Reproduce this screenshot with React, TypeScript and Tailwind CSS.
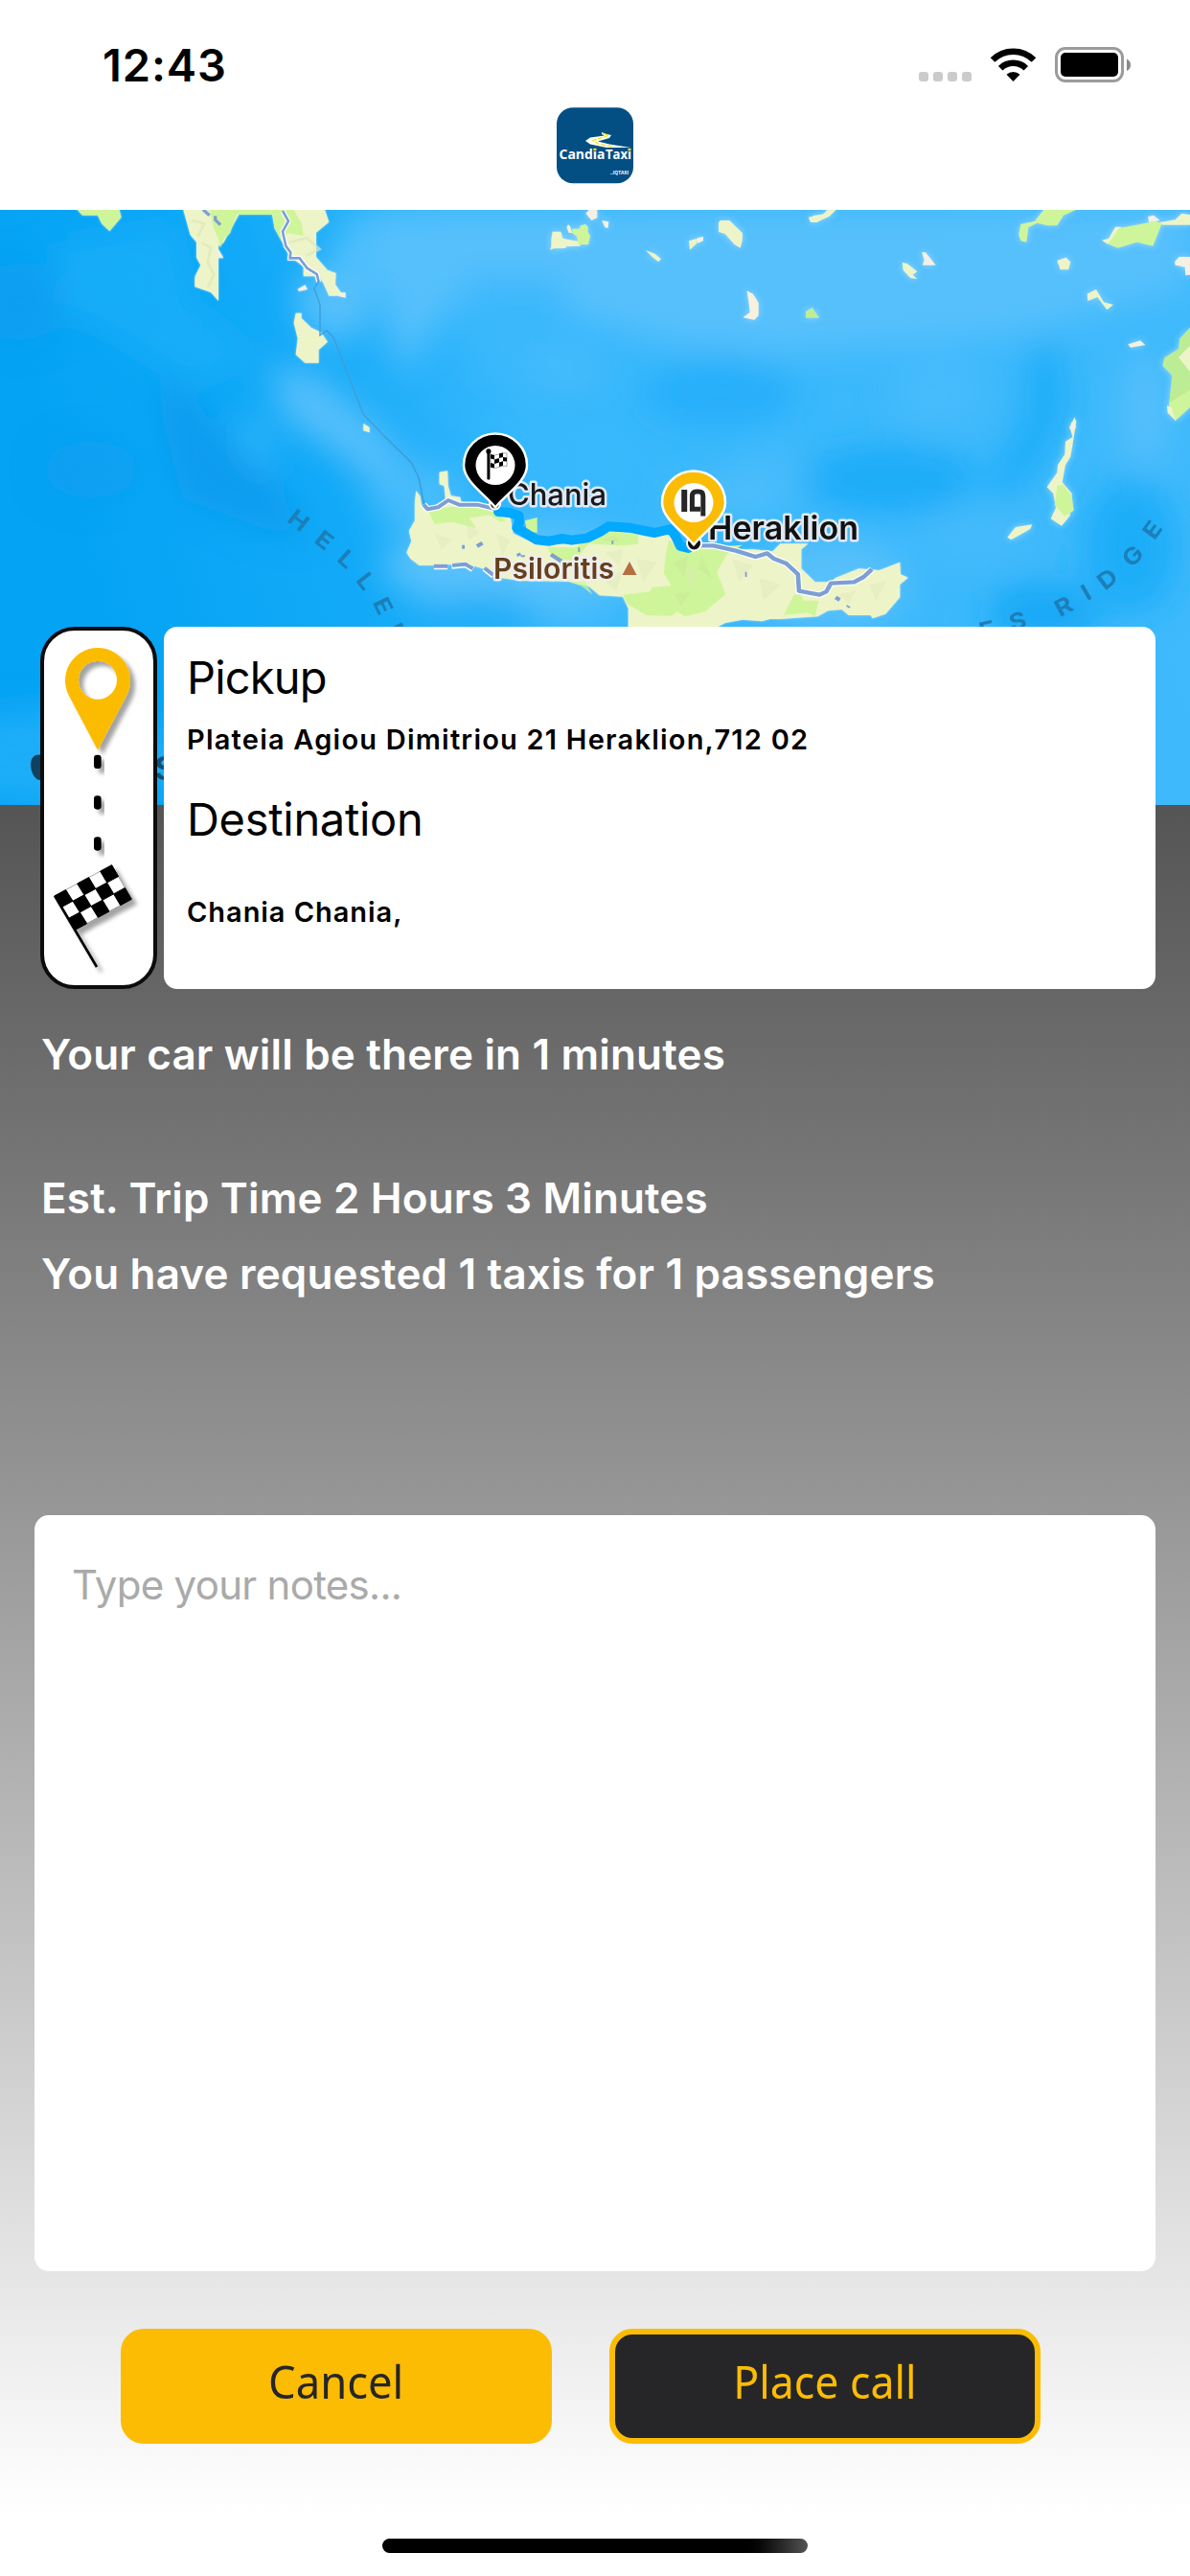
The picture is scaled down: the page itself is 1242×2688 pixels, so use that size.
import React from "react";

const LAND = "#edf4c8";
const GREEN = "#cff59a";
const ROCK = "#f3f0e4";

function Sea() {
  return (
    <g>
      <rect x="0" y="219" width="1242" height="621" fill="url(#sea)" />
      <g filter="url(#soft)">
        <ellipse cx="20" cy="315" rx="50" ry="40" fill="#0e9df0" opacity=".8" />
        <path d="M60 255L180 235L200 320L270 370L200 400L120 350L60 320Z" fill="#1fb0fa" opacity=".7" />
        <path d="M160 395L200 415L235 460L290 510L320 560L270 550L190 520L175 460Z" fill="#0b9bee" />
        <ellipse cx="95" cy="490" rx="50" ry="30" fill="#0b9cef" opacity=".6" />
        <path d="M280 380L330 390L400 450L430 490L400 515L350 470L300 440Z" fill="#57bffb" />
        <path d="M245 440L275 430L285 500L262 480Z" fill="#31b5fa" />
        <ellipse cx="350" cy="315" rx="40" ry="40" fill="#56c0fb" />
        <ellipse cx="400" cy="260" rx="50" ry="40" fill="#50bffc" />
        <path d="M400 219L1242 219L1242 300L1060 350L820 370L700 360L600 330L470 320L420 390L400 320Z" fill="#56c0fc" />
        <path d="M480 290L580 290L600 340L560 400L500 390Z" fill="#3ab8fc" />
        <ellipse cx="750" cy="410" rx="80" ry="35" fill="#25affa" />
        <ellipse cx="590" cy="385" rx="40" ry="20" fill="#47bcfc" />
        <ellipse cx="930" cy="500" rx="90" ry="35" fill="#1bacf8" />
        <ellipse cx="800" cy="490" rx="40" ry="20" fill="#46bbfb" />
        <path d="M1075 360L1105 360L1115 420L1090 480L1040 530L1030 500L1070 440Z" fill="#1dadf8" />
        <ellipse cx="980" cy="410" rx="50" ry="40" fill="#46bbfb" />
        <ellipse cx="1195" cy="430" rx="24" ry="60" fill="#56bffb" />
        <ellipse cx="1180" cy="570" rx="50" ry="70" fill="#1eadf8" />
        <ellipse cx="1020" cy="560" rx="60" ry="30" fill="#44bafb" />
        <ellipse cx="1090" cy="640" rx="60" ry="30" fill="#16a8f6" />
        <ellipse cx="440" cy="520" rx="50" ry="36" fill="#46bcfb" />
        <ellipse cx="540" cy="590" rx="140" ry="45" fill="#58c1fb" />
        <ellipse cx="760" cy="520" rx="70" ry="22" fill="#4dbdfb" />
        <ellipse cx="500" cy="640" rx="60" ry="20" fill="#1aadf8" />
        <ellipse cx="600" cy="645" rx="40" ry="12" fill="#44bbfb" />
        <ellipse cx="60" cy="790" rx="140" ry="50" fill="#1fadf8" />
        <ellipse cx="870" cy="610" rx="80" ry="50" fill="#56c0fb" />
      </g>
    </g>
  );
}

function NorthWestLand() {
  return (
    <g transform="matrix(.33333 0 0 .33333 0 210)" filter="url(#shore)">
      <path d="M236 20H372L380 50L343 94L318 70L306 44H258Z" fill={GREEN} />
      <path d="M572 20H760L700 130L684 140V312L660 285L610 268V236L628 200L615 176V128L596 106Z" fill={LAND} />
      <path d="M655 20H750L720 100L700 120L690 145L684 120L668 80Z" fill={GREEN} />
      <path d="M740 20H890V42H735Z" fill={GREEN} />
      <path d="M848 20H1015L1030 65L990 98V175L1025 215L1052 225L1050 260L1075 296H1030L1014 260L1000 235H950V205L905 170L880 120L860 85Z" fill={LAND} />
      <path d="M850 20H915L945 70L950 108L900 100L882 125L860 85Z" fill={GREEN} />
      <path d="M684 150L700 178H684ZM932 275L955 262L963 276L936 282ZM1062 286H1082V302L1062 298Z" fill={ROCK} />
      <path d="M926 350H944V366L975 396L1005 410L1026 440L998 465V506H955L926 480L932 430L920 380Z" fill={LAND} />
      <path d="M1138 696L1157 708V724L1138 718Z" fill={LAND} />
      <path d="M632 130L660 145L650 190L670 230L650 270M600 60L640 70L620 110M905 130L960 115L1000 150L960 170" fill="none" stroke="#dce4b8" strokeWidth="8" opacity=".6" />
      <path d="M885 30L903 62L885 95L895 140L910 160L908 178H938L962 210L992 228L998 252" fill="none" stroke="#fff" strokeWidth="15" />
      <path d="M885 30L903 62L885 95L895 140L910 160L908 178H938L962 210L992 228L998 252" fill="none" stroke="#7d9fd3" strokeWidth="8" />
      <path d="M636 26L656 44M674 46V58L690 74" fill="none" stroke="#7d9fd3" strokeWidth="10" />
    </g>
  );
}

function Cyclades() {
  return (
    <g filter="url(#shore)">
      <g transform="matrix(.33333 0 0 .33333 400 210)">
        <path d="M522 152L526 140V120L530 95H556L562 116L580 120L610 125L618 140L574 142L570 147L535 148ZM574 80L580 73L586 80L592 100L580 98Z" fill={LAND} />
        <path d="M592 86L614 86L618 76L634 72L642 82L640 94L648 108L642 136H612L606 110L592 100Z" fill={GREEN} />
        <path d="M634 38L644 27H670V52L652 60ZM684 60L706 64L704 84L694 82Z" fill={ROCK} />
        <path d="M822 154L850 164L870 180L862 190L844 176Z" fill={LAND} />
        <path d="M957 124L985 116L982 132L960 152Z" fill={LAND} />
        <path d="M984 114L1002 111V124L984 132Z" fill={ROCK} />
        <path d="M1050 66L1056 60H1084L1125 100L1124 124L1118 146L1100 136L1070 102L1050 96Z" fill={LAND} />
        <path d="M1138 280L1158 290L1175 318V358L1162 371L1126 364L1148 348L1144 312Z" fill="#f7f1df" />
        <path d="M1323 345L1343 333L1366 365H1323Z" fill="#bdee96" />
        <path d="M1332 50L1380 40V52L1358 66H1338Z" fill={LAND} />
      </g>
      <g transform="matrix(.33333 0 0 .33333 840 210)">
        <path d="M12 54L30 44L56 42L70 27H98L76 48L40 64L16 60Z" fill={LAND} />
        <path d="M305 192L320 195L352 220L338 230L352 244L330 240L308 216Z" fill={LAND} />
        <path d="M366 160H378L410 200H368L374 184Z" fill={ROCK} />
        <path d="M670 104L676 72L720 62L750 24H856L810 44L790 76H760L728 68L700 82L694 128L676 124Z" fill={GREEN} />
        <path d="M930 122L952 116L972 80H990V100L948 134ZM1110 66L1160 58L1180 38L1206 42V74H1120Z" fill={LAND} />
        <path d="M1074 48L1092 44L1112 60L1078 66Z" fill={ROCK} />
        <path d="M985 84L1050 72L1100 62L1118 70L1090 140L1040 128L980 146L950 134Z" fill={GREEN} />
        <path d="M790 186L818 176L832 190L826 214H800Z" fill={LAND} />
        <path d="M1158 190L1172 174H1206V230L1192 232L1190 206L1160 200Z" fill={ROCK} />
        <path d="M884 290L912 276L936 316L966 324L946 340L916 300L886 312Z" fill={LAND} />
        <path d="M1012 448L1050 436L1066 450L1020 458Z" fill={ROCK} />
        <path d="M1206 395L1174 430L1170 462L1126 490L1120 515L1150 545L1140 640L1160 688L1206 645Z" fill="#bced95" />
        <path d="M1206 590L1140 632L1162 684L1206 645Z" fill={GREEN} />
        <path d="M1206 452L1170 488L1206 534ZM1134 640L1148 644L1162 688L1136 662Z" fill={LAND} />
        <path d="M844 676L850 690L842 740L832 800L816 826L806 880L836 915L830 985L804 1016L770 994L786 960L778 915L758 895L790 850L792 826L814 792L816 752L838 738L830 708Z" fill={LAND} />
        <path d="M790 890L808 888L836 922L842 968L814 986L782 950Z" fill={GREEN} />
        <path d="M836 690L850 706L840 720L828 710Z" fill={ROCK} />
        <path d="M634 1052L660 1020L712 1012L706 1026L646 1060Z" fill={LAND} />
      </g>
    </g>
  );
}

const ROAD_EAST =
  "M930 418H965L1030 434L1088 453L1122 442L1140 458L1178 474L1212 508L1215 560L1275 572L1295 562L1308 536L1376 532L1404 516L1428 492";
const ROAD_WEST = "M118 290L130 304L160 298L190 276L222 290L275 290L330 304";

function Crete() {
  return (
    <g transform="matrix(.35714 0 0 .33333 400 430)">
      <g filter="url(#shore)">
        <path
          d="M92 282L96 246L108 264L112 290L130 306L182 276L178 232L164 226V188L188 184L190 232L198 262L225 266L228 282L320 302L372 330L380 380L440 410L520 414L600 400L660 372L760 380L840 376L860 430L900 430L1080 430L1138 436L1160 412H1242L1222 430V490L1262 532L1310 532L1320 520L1390 490L1450 495L1510 470L1512 508L1534 518L1510 540V580L1468 632L1430 646L1424 636H1360L1340 618L1300 622L1270 640L1160 648L1130 648L1108 655L1050 650L1000 660L978 672H716V615L700 578L632 574L600 545L540 530L400 528L320 515L290 490L240 475L150 480H105L80 460L68 440L82 404L75 372L92 340Z"
          fill={LAND}
        />
      </g>
      <path d="M130 306L200 296L290 300L320 310L358 340L345 344L310 322L252 332L272 364L205 344L150 350Z" fill={GREEN} />
      <path d="M414 340L450 330V378L420 372Z" fill={GREEN} />
      <path d="M480 422L560 424L620 390L660 372L745 384V414L690 418L600 412L560 464L520 468L490 446Z" fill={GREEN} />
      <path d="M835 400L870 430L1000 420L1050 416L1005 444L975 500L1000 570L940 625L880 640L860 625L840 638L770 636L712 600L700 572L780 562L786 548L842 544L820 505L825 450Z" fill={GREEN} />
      <path d="M1170 636L1200 572L1220 570L1228 590L1272 590L1262 640L1240 628Z" fill={GREEN} />
      <path d="M540 530H590L612 572L580 545Z" fill={GREEN} opacity=".7" />
      <path
        fill="#dde5b9"
        opacity=".4"
        d="M240 330L280 380L250 400ZM330 380L370 400L350 450ZM150 380L200 400L170 430ZM650 440L700 430L690 480ZM740 460L800 470L760 530ZM1020 460L1080 480L1040 530ZM1100 520L1160 540L1110 590ZM880 470L920 500L900 560ZM1330 570L1380 560L1360 600ZM1420 540L1470 530L1440 590ZM640 520L700 500L680 560Z"
      />
      <path fill="#c8e997" opacity=".6" d="M850 470L890 450L880 520ZM930 450L960 520L920 490ZM850 570L900 560L870 610ZM640 400L680 385L690 410Z" />
      <g fill="none" strokeLinejoin="round">
        <path d="M0 72L82 158L104 206L112 250L120 292" stroke="#3c9bd1" strokeWidth="4" />
        <path d={ROAD_WEST} stroke="#fff" strokeWidth="19" />
        <path d={ROAD_WEST} stroke="#7d9fd3" strokeWidth="12" />
        <path d={ROAD_EAST} stroke="#fff" strokeWidth="20" />
        <path d={ROAD_EAST} stroke="#7d9fd3" strokeWidth="13" />
        <path d="M148 484H188M200 482L240 478L262 492M296 490L322 512" stroke="#fff" strokeWidth="18" />
        <path d="M148 482H188M202 480L240 476L262 490M296 488L322 510" stroke="#7d9fd3" strokeWidth="12" />
        <path d="M274 420L290 410M230 422H238M490 446L522 468M394 442L398 450M408 448V454M1322 580L1334 588" stroke="#7d9fd3" strokeWidth="12" />
        <path d="M1060 500V516M572 424V438M670 402V414M1354 606L1364 612" stroke="#7d9fd3" strokeWidth="5" />
      </g>
    </g>
  );
}

type Letter = [string, number, number, number];
const RIDGE_LETTERS: Letter[] = [
  ["H", 311.7, 542.7, 38],
  ["E", 338.5, 563.5, 38],
  ["L", 362, 583, 42],
  ["L", 382, 606, 52],
  ["E", 400, 632, 64],
  ["N", 415, 661, 64],
  ["E", 1030, 657, -12],
  ["S", 1062, 648, -16],
  ["R", 1110, 632.5, -28],
  ["I", 1133.5, 618, -30],
  ["D", 1155.5, 604, -38],
  ["G", 1182, 580, -48],
  ["E", 1202.5, 552.7, -54],
];

const FLAG = { a: [170, 945], b: [350, 848], c: [412, 955], d: [237, 1050] };
function flagPoint(u: number, v: number) {
  const { a, b, c, d } = FLAG;
  const at = (i: number) =>
    a[i] * (1 - u) * (1 - v) + b[i] * u * (1 - v) + c[i] * u * v + d[i] * (1 - u) * v;
  return `${at(0).toFixed(1)},${at(1).toFixed(1)}`;
}
const CHECKS: string[] = [];
for (let r = 0; r < 3; r++)
  for (let c = 0; c < 5; c++)
    if ((r + c) % 2 === 0)
      CHECKS.push(
        [
          flagPoint(c / 5, r / 3),
          flagPoint((c + 1) / 5, r / 3),
          flagPoint((c + 1) / 5, (r + 1) / 3),
          flagPoint(c / 5, (r + 1) / 3),
        ].join(" ")
      );

function PinShape({ fill }: { fill: string }) {
  return (
    <>
      <path d="M0 44C-10 31-33 17-33 0A33 33 0 0 1 33 0C33 17 10 31 0 44Z" fill={fill} stroke="#fff" strokeWidth="2.5" strokeLinejoin="round" />
      <circle r="20.5" fill="#fff" />
    </>
  );
}

function MapView() {
  return (
    <svg className="block h-[621px] w-full shrink-0" viewBox="0 219 1242 621" preserveAspectRatio="none">
      <defs>
        <linearGradient id="sea" x1="0" y1=".15" x2="1" y2="0">
          <stop offset="0" stopColor="#05a3f4" />
          <stop offset=".22" stopColor="#12aaf8" />
          <stop offset=".4" stopColor="#37b8fc" />
          <stop offset="1" stopColor="#40bafc" />
        </linearGradient>
        <filter id="soft" x="-10%" y="-10%" width="120%" height="120%">
          <feGaussianBlur stdDeviation="17" />
        </filter>
        <filter id="shore" x="-5%" y="-5%" width="110%" height="115%">
          <feDropShadow dx="0" dy="0" stdDeviation="3.5" floodColor="#9fdcff" floodOpacity=".95" />
        </filter>
      </defs>
      <Sea />
      <NorthWestLand />
      <path d="M333 293L328 301L334 318V350L341 345L348 352L379 432L400 454" fill="none" stroke="#3d9fd8" strokeWidth="1.4" />
      <Cyclades />
      <Crete />
      {RIDGE_LETTERS.map(([ch, x, y, r], i) => (
        <text key={i} transform={`translate(${x} ${y}) rotate(${r}) scale(1.12 1)`} y="8.7" textAnchor="middle" className="font-[Inter] text-[24px] font-bold" fill="#1c7fb8">
          {ch}
        </text>
      ))}
      <path
        transform="translate(470 430) scale(.33333)"
        d="M150 312L185 315L215 325L216 345L208 362L240 382L270 400L310 404L350 396L380 401L430 394L470 374L495 358L560 362L610 372L640 378L690 366L706 390L720 420L745 426"
        fill="none"
        stroke="#03a8ff"
        strokeWidth="30"
        strokeLinejoin="round"
        strokeLinecap="round"
      />
      <g strokeLinejoin="round" className="font-[Inter] [paint-order:stroke]" strokeWidth="5">
        <text x="530" y="527" textLength="103" className="text-[31px] font-medium" fill="#17191c" stroke="#dfe9f5">Chania</text>
        <text x="739" y="563" textLength="157" className="text-[34px] font-semibold" fill="#111" stroke="#dfe9f5">Heraklion</text>
        <text x="515" y="604" textLength="126" className="text-[30px] font-semibold" fill="#65401c" stroke="#eeeef0">Psiloritis</text>
      </g>
      <path d="M657 586L664.5 600H649.5Z" fill="#b4703f" stroke="#f3ede6" strokeWidth="2" paintOrder="stroke" />
      <circle cx="516.5" cy="526" r="5.500" fill="#222" stroke="#fff" strokeWidth="2" />
      <circle cx="724.5" cy="567" r="7.5" fill="#111" stroke="#fff" strokeWidth="2" />
      <g transform="translate(517 485.5)">
        <PinShape fill="#000" />
        <rect x="-8.6" y="-15" width="3" height="30" rx="1" fill="#000" />
        <circle cx="-7.1" cy="-14.6" r="2.6" fill="#000" />
        <path d="M-5-11.5C0-8 5-14 12-12.5V1C6-.5 0 5-5 2Z" fill="#fff" stroke="#555" strokeWidth=".5" />
        <path d="M-5-11.5L-1-10.5V-6L-5-7ZM4-12.2L8-13V-8.5L4-7.5ZM-1-6L4-7.5V-3L-1-1.5ZM8-8.5L12-8V-4L8-4.3ZM-5-2.5L-1-1.5V2.8L-5 2ZM4-3L8-4.3V.2L4 1.400Z" fill="#000" />
      </g>
      <g transform="translate(724 524.5)">
        <PinShape fill="#fbbc05" />
        <g fill="none" stroke="#262626">
          <path d="M-9.800-13.500V9.500" strokeWidth="6" />
          <path d="M9.800 14V-7Q9.800-11.500 5.500-11.500H2.500Q-1.600-11.500-1.600-7V6.800H7" strokeWidth="5" />
        </g>
      </g>
      <path d="M47 790C38 784 32 790 32 798C32 806 37 815 43 814H56C62 808 62 790 56 786Z" fill="#0f4161" />
      <text x="185" y="814" textAnchor="end" className="font-[Inter] text-[46px] font-medium" fill="#0f5177">Maps</text>
    </svg>
  );
}

function RoutePictogram() {
  return (
    <div className="h-[378px] w-[122px] shrink-0 rounded-[36px] border-4 border-[#0c0c0c] bg-white">
      <svg className="-m-1 h-[378px] w-[122px]" viewBox="126 102 366 1134">
        <defs>
          <filter id="cast" x="-30%" y="-30%" width="170%" height="170%">
            <feDropShadow dx="15" dy="15" stdDeviation="6" floodColor="#000" floodOpacity=".36" />
          </filter>
        </defs>
        <path filter="url(#cast)" fillRule="evenodd" fill="#fbbc05" d="M306 488L216 318A102 102 0 1 1 396 318ZM306 209A60 60 0 1 0 306 329A60 60 0 1 0 306 209Z" />
        <g filter="url(#cast)">
          <rect x="294" y="503" width="23" height="43" rx="10" />
          <rect x="294" y="631" width="23" height="43" rx="10" />
          <rect x="294" y="760" width="23" height="43" rx="10" />
        </g>
        <g filter="url(#cast)">
          <path d="M170 945L350 848L412 955L237 1050Z" fill="#fff" stroke="#777" strokeWidth="2" />
          {CHECKS.map((p) => (
            <polygon key={p} points={p} stroke="#000" strokeWidth="3" strokeLinejoin="round" />
          ))}
          <path d="M172 945L303 1167" stroke="#000" strokeWidth="8" />
        </g>
      </svg>
    </div>
  );
}

function StatusBar() {
  return (
    <div className="flex h-[112px] w-full items-start justify-between pl-[107px] pr-[60px]">
      <span className="mt-[40px] text-[47px] leading-[56px] font-semibold tracking-[0.9px]">12:43</span>
      <svg className="mt-[40px] h-[50px] w-[230px]" viewBox="950 40 230 50">
        <g fill="#cbcbcb">
          <rect x="957" y="75" width="10" height="10" rx="3" />
          <rect x="972" y="75" width="10" height="10" rx="3" />
          <rect x="987" y="75" width="10" height="10" rx="3" />
          <rect x="1002" y="75" width="10" height="10" rx="3" />
        </g>
        <path d="M1055.5 85L1048.5 77.700A10.5 10.5 0 0 1 1062.5 77.700Z" />
        <path d="M1042.2 71.2A19 19 0 0 1 1068.8 71.2" fill="none" stroke="#000" strokeWidth="6.5" />
        <path d="M1034 62.5A30.5 30.5 0 0 1 1077 62.5" fill="none" stroke="#000" strokeWidth="6.5" />
        <rect x="1100.5" y="50.5" width="69" height="34" rx="9.5" fill="none" stroke="#9b9b9b" strokeWidth="3" />
        <rect x="1105" y="55" width="60" height="25" rx="5" />
        <path d="M1174 61.5Q1178 63.5 1178 67.7Q1178 72 1174 74Z" fill="#8a8a8a" />
      </svg>
    </div>
  );
}

function Logo() {
  return (
    <svg className="h-[80px] w-[80px] overflow-visible" viewBox="0 0 80 80">
      <rect y=".3" width="80" height="79" rx="17" fill="#034f84" />
      <path d="M47 26L50 27.5L57 29L55 32L43 35.5L55 38.5L77 42L52 42L35 38.5L30 35L35 31.5L50 29.5L47 28Z" fill="#fff" />
      <path d="M48 27L54 29.5L38 34.5L43 38L58 41" fill="none" stroke="#f3e600" strokeWidth="1.2" strokeDasharray="5 1.5" />
      <text x="2.5" y="54" textLength="48" lengthAdjust="spacingAndGlyphs" className="font-['Open_Sans'] text-[15px] font-bold" fill="#fff">Candia</text>
      <text x="51" y="54" textLength="27" lengthAdjust="spacingAndGlyphs" className="font-['Open_Sans'] text-[15px] font-bold" fill="#fff">Taxi</text>
      <rect x="38.5" y="42.800" width="2.800" height="2.400" fill="#f3e600" />
      <rect x="74.500" y="42.800" width="2.800" height="2.400" fill="#f3e600" />
      <text x="56" y="70" textLength="19" lengthAdjust="spacingAndGlyphs" className="font-['Open_Sans'] text-[6px] font-bold" fill="#fff">..IQTAXI</text>
    </svg>
  );
}

export default function App() {
  return (
    <div className="flex h-[2688px] w-[1242px] flex-col overflow-hidden bg-white font-[Inter,sans-serif] text-black">
      <header className="flex h-[219px] shrink-0 flex-col items-center">
        <StatusBar />
        <Logo />
      </header>
      <MapView />
      <main className="flex grow flex-col bg-linear-to-b from-[#555] from-0% to-white to-[96.5%]">
        <section className="relative -mt-[186px] flex gap-[7px] pl-[42px] pr-9">
          <RoutePictogram />
          <div className="flex h-[378px] grow flex-col items-start rounded-[14px] bg-white pl-[24px] pt-[25px]">
            <h2 className="text-[47px] leading-[56px] tracking-[-0.8px]">Pickup</h2>
            <p className="mt-[19px] text-[29px] leading-[36px] font-semibold tracking-[1.22px]">Plateia Agiou Dimitriou 21 Heraklion,712 02</p>
            <h2 className="mt-[37px] text-[47px] leading-[56px] tracking-[-0.3px]">Destination</h2>
            <p className="mt-[51px] text-[29px] leading-[36px] font-semibold tracking-[0.95px]">Chania Chania,</p>
          </div>
        </section>
        <section className="mt-[41px] flex h-[508px] flex-col items-start pl-[43px] text-[44px] leading-[54px] font-semibold tracking-[0.17px] text-white">
          <p>Your car will be there in 1 minutes</p>
          <p className="mt-[96px]">Est. Trip Time 2 Hours 3 Minutes</p>
          <p className="mt-[25px]">You have requested 1 taxis for 1 passengers</p>
        </section>
        <div className="mx-9 h-[789px] shrink-0 rounded-[15px] bg-white pl-[39px] pt-[47px] text-[42px] leading-[52px] tracking-[-0.7px] text-[#aaa]">
          Type your notes...
        </div>
        <div className="mt-[60px] flex gap-[60px] pl-[126px] font-['Noto_Sans',sans-serif] text-[48px] leading-none">
          <button className="flex h-[120px] w-[450px] items-center justify-center rounded-[24px] bg-[#fbbc03] pb-[10px] text-[#262628]">
            <span className="scale-x-[0.945]">Cancel</span>
          </button>
          <button className="flex h-[120px] w-[450px] items-center justify-center rounded-[24px] border-6 border-[#fbbc03] bg-[#262628] pb-[10px] text-[#fbbc03]">
            <span className="scale-x-[0.93]">Place call</span>
          </button>
        </div>
        <div className="mx-auto mt-[99px] h-[15px] w-[444px] rounded-full bg-linear-to-r from-black from-84% to-[#555]" />
      </main>
    </div>
  );
}
